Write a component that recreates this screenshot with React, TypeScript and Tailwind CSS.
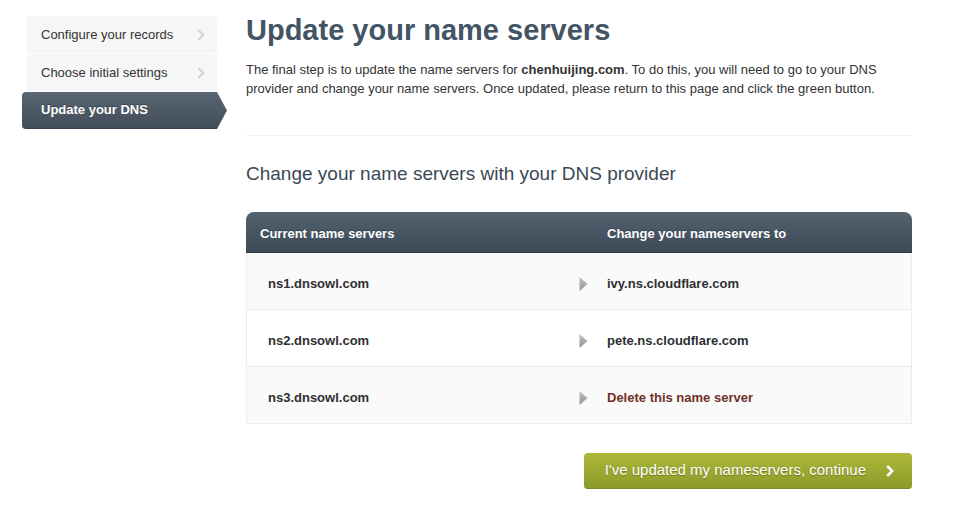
const steps = ["Configure your records", "Choose initial settings"];

const nameServers = [
  { current: "ns1.dnsowl.com", next: "ivy.ns.cloudflare.com" },
  { current: "ns2.dnsowl.com", next: "pete.ns.cloudflare.com" },
  { current: "ns3.dnsowl.com", next: null },
];

const Chevron = ({ className }: { className: string }) => (
  <svg
    viewBox="0 0 8 12"
    className={`h-3 w-2 shrink-0 ${className}`}
    fill="none"
    stroke="currentColor"
    aria-hidden="true"
  >
    <path d="M1.2 1 6.3 6 1.2 11" />
  </svg>
);

const Arrow = () => (
  <svg viewBox="0 0 9 14" className="h-3.5 w-[9px]" aria-hidden="true">
    <defs>
      <linearGradient id="arrow" x1="0" y1="0" x2="0" y2="1">
        <stop offset="0" stopColor="#c4c4c4" />
        <stop offset="1" stopColor="#929292" />
      </linearGradient>
    </defs>
    <path d="M0.5 0 8.5 7 0.5 14Z" fill="url(#arrow)" />
  </svg>
);

const Sidebar = () => (
  <nav className="mt-1 w-[205px] shrink-0 text-[13px]">
    <ol>
      {steps.map((step) => (
        <li key={step} className="mr-2.5 ml-[5px] border-b border-white">
          <a
            href="#"
            className="flex h-[37px] items-center justify-between rounded-t-sm bg-[#f6f6f6] pr-3 pl-3.5 text-[#333]"
          >
            {step}
            <Chevron className="stroke-2 text-[#d2d2d2]" />
          </a>
        </li>
      ))}
      <li>
        <a
          href="#"
          aria-current="step"
          className="flex h-[37px] items-center rounded-l border-b border-[#36424d] bg-linear-to-b from-[#5a6772] to-[#414e59] pl-[19px] font-bold text-white [clip-path:polygon(0_0,calc(100%-10px)_0,100%_50%,calc(100%-10px)_100%,0_100%)] text-shadow-[0_-1px_0_#36424d]"
        >
          Update your DNS
        </a>
      </li>
    </ol>
  </nav>
);

const NameServerTable = () => (
  <table className="mt-6 w-full table-fixed border-separate border-spacing-0 text-left text-[13px]">
    <thead>
      <tr className="h-[41px] text-white text-shadow-[0_-1px_0_#36424d]">
        <th className="w-1/2 rounded-tl-lg border-b border-[#303c48] bg-linear-to-b from-[#54626f] to-[#3c4956] pt-1 pl-3.5">
          Current name servers
        </th>
        <th className="w-7 border-b border-[#303c48] bg-linear-to-b from-[#54626f] to-[#3c4956]"></th>
        <th className="rounded-tr-lg border-b border-[#303c48] bg-linear-to-b from-[#54626f] to-[#3c4956] pt-1">
          Change your nameservers to
        </th>
      </tr>
    </thead>
    <tbody className="text-[#2f2f2f]">
      {nameServers.map(({ current, next }) => (
        <tr key={current} className="h-[57px] odd:bg-[#fafafa]">
          <td className="border-b border-l border-[#ececec] pt-1.5 pl-[21px] font-bold">
            {current}
          </td>
          <td className="border-b border-[#ececec] pt-1.5">
            <Arrow />
          </td>
          <td className="border-r border-b border-[#ececec] pt-1.5 font-bold">
            {next ?? (
              <button type="button" className="font-bold text-[#6f3028]">
                Delete this name server
              </button>
            )}
          </td>
        </tr>
      ))}
    </tbody>
  </table>
);

const App = () => {
  return (
    <div className="flex gap-[19px] bg-white pt-3 pr-12 pl-[22px] font-['Liberation_Sans',Arial,sans-serif]">
      <Sidebar />
      <main className="min-w-0 grow">
        <h1 className="text-[29px] leading-9 font-bold text-[#435465]">
          Update your name servers
        </h1>
        <p className="mt-3 text-[13px] leading-[19px] text-[#333]">
          The final step is to update the name servers for{" "}
          <strong>chenhuijing.com</strong>. To do this, you will need to go to
          your DNS provider and change your name servers. Once updated, please
          return to this page and click the green button.
        </p>
        <hr className="mt-[37px] border-[#f0f0f0]" />
        <h2 className="mt-6 text-[19px] leading-7 text-[#3b4854]">
          Change your name servers with your DNS provider
        </h2>
        <NameServerTable />
        <div className="mt-[29px] flex justify-end pb-6">
          <button
            type="button"
            className="flex h-9 items-center gap-5 rounded border-b border-[#7d8a2b] bg-linear-to-b from-[#adb93a] to-[#8c9a2a] pr-[18px] pl-[21px] text-[15px] text-white text-shadow-[0_1px_1px_#6d7a20]"
          >
            I've updated my nameservers, continue
            <Chevron className="stroke-[2.5]" />
          </button>
        </div>
      </main>
    </div>
  );
};

export default App;
